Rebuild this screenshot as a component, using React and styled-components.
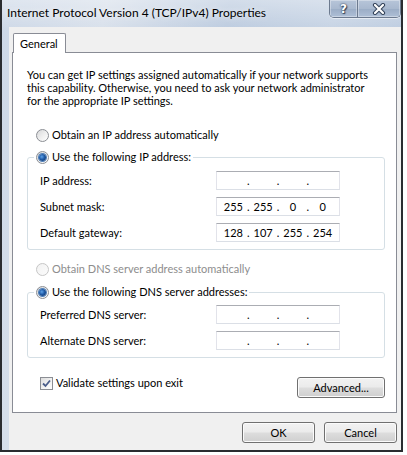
import React from 'react';
import styled, { createGlobalStyle } from 'styled-components';

const GlobalStyle = createGlobalStyle`
  html, body {
    margin: 0;
    padding: 0;
    background: #ffffff;
  }
  body {
    font-family: "Segoe UI", Lato, "Noto Sans", sans-serif;
    font-size: 11px;
    color: #000000;
  }
  * {
    box-sizing: border-box;
  }
`;

const Window = styled.div`
  width: 403px;
  height: 452px;
  display: flex;
  flex-direction: column;
  border: 2px solid #2a2c30;
  border-top: none;
  background:
    linear-gradient(180deg, rgba(255, 255, 255, 0.35) 0px, rgba(255, 255, 255, 0) 30px),
    linear-gradient(100deg, #cdd8e7 0%, #d8e0eb 22%, #bccbdf 48%, #c6d3e4 70%, #b4c5dc 100%);
`;

const TitleBar = styled.div`
  height: 27px;
  flex: none;
  display: flex;
  align-items: flex-start;
  justify-content: space-between;
  padding-left: 5px;
`;

const Title = styled.div`
  padding-top: 5px;
  font-size: 12px;
  line-height: 16px;
  color: #000;
  text-shadow: 0 0 6px rgba(255, 255, 255, 0.9);
`;

const CaptionButtons = styled.div`
  display: flex;
  height: 18px;
  border: 1px solid #6c7a8f;
  border-top: none;
  border-radius: 0 0 5px 5px;
  overflow: hidden;
  box-shadow: 0 1px 0 rgba(255, 255, 255, 0.5);
`;

const CaptionButton = styled.div`
  width: ${(p) => p.$width}px;
  display: flex;
  align-items: center;
  justify-content: center;
  background: linear-gradient(180deg, #b7c5d9 0%, #a9b9cf 50%, #9aacc5 51%, #aebfd6 100%);
  box-shadow: inset 0 0 0 1px rgba(255, 255, 255, 0.35);
  & + & {
    border-left: 1px solid #6c7a8f;
  }
`;

const HelpGlyph = styled.span`
  font-family: "DejaVu Sans", sans-serif;
  font-weight: bold;
  font-size: 12px;
  color: #ffffff;
  text-shadow: 0 0 1px #34435a, 0 0 2px #34435a, 1px 1px 1px #34435a;
`;

const Client = styled.div`
  flex: 1;
  margin-left: 7px;
  background: #f0f0f0;
  padding: 6px 4px 0 3px;
  display: flex;
  flex-direction: column;
`;

const TabStrip = styled.div`
  height: 19px;
  display: flex;
`;

const Tab = styled.div`
  position: relative;
  z-index: 1;
  height: 20px;
  margin-left: 1px;
  padding: 2px 7px 0 6px;
  line-height: 16px;
  background: #ffffff;
  border: 1px solid #898c95;
  border-bottom: none;
  border-radius: 2px 2px 0 0;
`;

const Panel = styled.div`
  background: #ffffff;
  border: 1px solid #898c95;
  padding: 15px 11px 14px 14px;
  display: flex;
  flex-direction: column;
`;

const Intro = styled.p`
  margin: 0;
  line-height: 13px;
  white-space: nowrap;
`;

const OptionRow = styled.label`
  display: flex;
  align-items: center;
  gap: 3px;
  height: 16px;
  line-height: 16px;
  margin-top: ${(p) => p.$top || 0}px;
  margin-left: 9px;
  color: ${(p) => (p.$disabled ? '#8d8d8d' : '#000')};
`;

const Radio = styled.span`
  width: 13px;
  height: 13px;
  flex: none;
  border-radius: 50%;
  border: 1px solid ${(p) => (p.$disabled ? '#c6c6c6' : '#8b8e94')};
  background: ${(p) =>
    p.$disabled
      ? 'linear-gradient(135deg, #f2f2f2, #fbfbfb)'
      : 'linear-gradient(135deg, #d6d7d9 0%, #eeeeee 50%, #ffffff 100%)'};
  display: flex;
  align-items: center;
  justify-content: center;
  &::after {
    content: '';
    width: 7px;
    height: 7px;
    border-radius: 50%;
    display: ${(p) => (p.$checked ? 'block' : 'none')};
    background: radial-gradient(circle at 40% 40%, #5fa3e8 0%, #1f5aa6 45%, #0b2f63 100%);
    box-shadow: 0 0 0 1px #4f7fb8;
  }
`;

const Group = styled.fieldset`
  margin: ${(p) => p.$top}px 0 0 0;
  padding: ${(p) => p.$padTop}px 44px 7px 12px;
  min-width: 0;
  border: 1px solid #d5dfe5;
  border-radius: 3px;
  display: grid;
  grid-template-columns: 1fr 124px;
  row-gap: 7px;
  align-items: center;
`;

const Legend = styled.legend`
  margin-left: -6px;
  padding: 0 2px;
  line-height: 16px;
  height: 16px;
`;

const LegendInner = styled.span`
  display: flex;
  align-items: center;
  gap: 3px;
`;

const FieldLabel = styled.span`
  line-height: 16px;
`;

const IpField = styled.div`
  height: 19px;
  display: flex;
  align-items: center;
  padding: 0 4px;
  background: #ffffff;
  border: 1px solid #dbdfe6;
  border-top-color: #abadb3;
  border-left-color: #e2e3ea;
  border-right-color: #e2e3ea;
  line-height: 16px;
`;

const Octet = styled.span`
  width: 25px;
  text-align: center;
`;

const Dot = styled.span`
  width: 5px;
  text-align: center;
`;

const BottomRow = styled.div`
  margin-top: 19px;
  display: flex;
  align-items: center;
  justify-content: space-between;
  padding-left: 13px;
`;

const CheckLabel = styled.label`
  display: flex;
  align-items: center;
  gap: 3px;
  line-height: 16px;
  margin-top: -9px;
`;

const CheckBox = styled.span`
  width: 13px;
  height: 13px;
  flex: none;
  border: 1px solid #8b8e94;
  background: linear-gradient(135deg, #dcdcdc 0%, #f2f2f2 55%, #ffffff 100%);
  display: flex;
  align-items: center;
  justify-content: center;
`;

const Button = styled.button`
  width: ${(p) => p.$width}px;
  height: 21px;
  padding: 0;
  font: inherit;
  color: #000;
  border: 1px solid #707070;
  border-radius: 3px;
  background: linear-gradient(180deg, #f2f2f2 0%, #ebebeb 48%, #dddddd 52%, #cfcfcf 100%);
  box-shadow: inset 0 0 0 1px #fbfbfb;
  line-height: 17px;
`;

const DialogButtons = styled.div`
  margin-top: 9px;
  display: flex;
  justify-content: flex-end;
  gap: 9px;
`;

const IpValue = ({ parts = ['', '', '', ''] }) => (
  <IpField>
    <Octet>{parts[0]}</Octet>
    <Dot>.</Dot>
    <Octet>{parts[1]}</Octet>
    <Dot>.</Dot>
    <Octet>{parts[2]}</Octet>
    <Dot>.</Dot>
    <Octet>{parts[3]}</Octet>
  </IpField>
);

const CloseGlyph = () => (
  <svg width="14" height="12" viewBox="0 0 14 12">
    <path d="M3 2 L11 10 M11 2 L3 10" stroke="#34435a" strokeWidth="4.2" strokeLinecap="round" />
    <path d="M3 2 L11 10 M11 2 L3 10" stroke="#ffffff" strokeWidth="2.2" strokeLinecap="round" />
  </svg>
);

const CheckMark = () => (
  <svg width="9" height="9" viewBox="0 0 9 9">
    <path d="M1 4.5 L3.5 7 L8 1.5" fill="none" stroke="#4a5d8a" strokeWidth="1.8" />
  </svg>
);

const App = () => {
  return (
    <>
      <GlobalStyle />
      <Window>
        <TitleBar>
          <Title>Internet Protocol Version 4 (TCP/IPv4) Properties</Title>
          <CaptionButtons>
            <CaptionButton $width={27}>
              <HelpGlyph>?</HelpGlyph>
            </CaptionButton>
            <CaptionButton $width={43}>
              <CloseGlyph />
            </CaptionButton>
          </CaptionButtons>
        </TitleBar>

        <Client>
          <TabStrip>
            <Tab>General</Tab>
          </TabStrip>

          <Panel>
            <Intro>
              You can get IP settings assigned automatically if your network supports
              <br />
              this capability. Otherwise, you need to ask your network administrator
              <br />
              for the appropriate IP settings.
            </Intro>

            <OptionRow $top={20}>
              <Radio />
              Obtain an IP address automatically
            </OptionRow>

            <Group $top={6} $padTop={6}>
              <Legend>
                <LegendInner>
                  <Radio $checked />
                  Use the following IP address:
                </LegendInner>
              </Legend>
              <FieldLabel>IP address:</FieldLabel>
              <IpValue />
              <FieldLabel>Subnet mask:</FieldLabel>
              <IpValue parts={['255', '255', '0', '0']} />
              <FieldLabel>Default gateway:</FieldLabel>
              <IpValue parts={['128', '107', '255', '254']} />
            </Group>

            <OptionRow $top={11} $disabled>
              <Radio $disabled />
              Obtain DNS server address automatically
            </OptionRow>

            <Group $top={7} $padTop={5}>
              <Legend>
                <LegendInner>
                  <Radio $checked />
                  Use the following DNS server addresses:
                </LegendInner>
              </Legend>
              <FieldLabel>Preferred DNS server:</FieldLabel>
              <IpValue />
              <FieldLabel>Alternate DNS server:</FieldLabel>
              <IpValue />
            </Group>

            <BottomRow>
              <CheckLabel>
                <CheckBox>
                  <CheckMark />
                </CheckBox>
                Validate settings upon exit
              </CheckLabel>
              <Button $width={88}>Advanced...</Button>
            </BottomRow>
          </Panel>

          <DialogButtons>
            <Button $width={73}>OK</Button>
            <Button $width={73}>Cancel</Button>
          </DialogButtons>
        </Client>
      </Window>
    </>
  );
};

export default App;
